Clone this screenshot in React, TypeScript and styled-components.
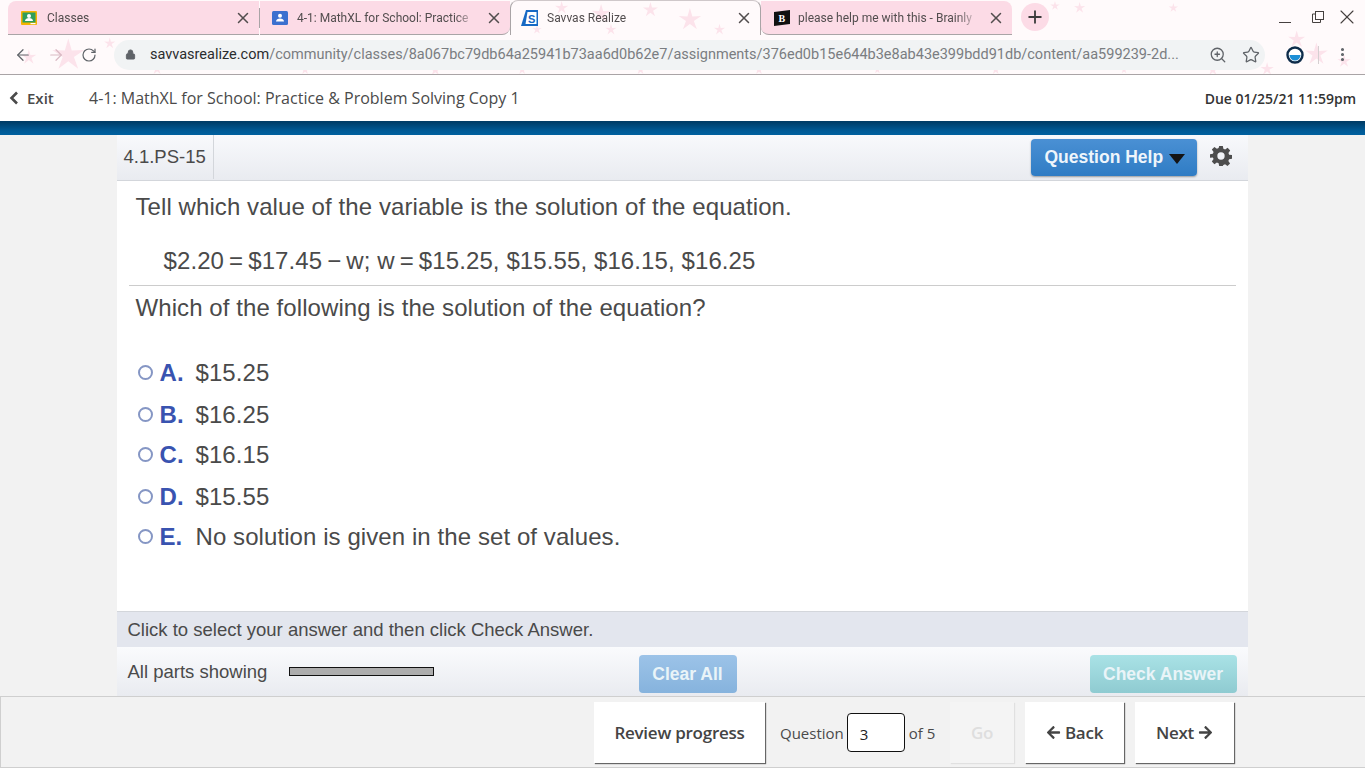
import React from "react";
import styled, { createGlobalStyle } from "styled-components";
import { ArrowLeft, ArrowRight, RotateCw, Lock, ZoomIn, Star, MoreVertical, Plus, X } from "lucide-react";
import { FaArrowLeft, FaArrowRight } from "react-icons/fa";

const GlobalStyle = createGlobalStyle`
  html, body { margin: 0; padding: 0; height: 100%; overflow: hidden; background: #f2f2f2; }
  * { box-sizing: border-box; }
`;

const starSpots = [
  [60, 56, 17], [20, 58, 8], [102, 44, 6], [150, 70, 6], [300, 71, 5], [432, 71, 6], [600, 14, 10], [650, 10, 8], [690, 20, 12],
  [560, 8, 7], [720, 30, 6], [535, 30, 5], [610, 30, 6], [1085, 8, 6], [1180, 8, 5], [1220, 71, 6], [1305, 40, 9], [1325, 55, 12],
  [1275, 70, 7], [1130, 71, 4], [1353, 62, 7], [880, 71, 4], [760, 71, 5], [640, 71, 5], [520, 71, 5], [1000, 71, 5], [1060, 6, 5],
];

function starPath(cx: number, cy: number, r: number) {
  const pts: string[] = [];
  for (let i = 0; i < 10; i++) {
    const rad = i % 2 === 0 ? r : r * 0.35;
    const a = (Math.PI / 5) * i - Math.PI / 2;
    pts.push(`${(cx + rad * Math.cos(a)).toFixed(1)},${(cy + rad * Math.sin(a)).toFixed(1)}`);
  }
  return pts.join(" ");
}

const Chrome = styled.div`
  position: relative;
  height: 75px;
  background: #fffafb;
  border-bottom: 1px solid #a9a4a6;
  font-family: Roboto, "Liberation Sans", sans-serif;
  overflow: hidden;
`;

const StarLayer = styled.svg`
  position: absolute;
  inset: 0;
  width: 100%;
  height: 100%;
`;

const TabStrip = styled.div`
  position: relative;
  height: 35px;
  display: flex;
  align-items: flex-end;
  padding-left: 8px;
`;

const Tab = styled.div<{ $active?: boolean; $w: number; $pad: number; $rounded?: string }>`
  position: relative;
  width: ${(p) => p.$w}px;
  height: ${(p) => (p.$active ? "35px" : "34px")};
  flex: none;
  display: flex;
  align-items: center;
  padding: 0 7px 0 ${(p) => p.$pad}px;
  gap: 8px;
  font-size: 12px;
  color: #524d4e;
  background: ${(p) => (p.$active ? "transparent" : "#fcdbe6")};
  border-radius: ${(p) => p.$rounded || "0"};
  border-bottom: ${(p) => (p.$active ? "none" : "1px solid #a9a4a6")};
  border-top: ${(p) => (p.$active ? "1px solid #cfc8ca" : "none")};
  border-left: ${(p) => (p.$active ? "1px solid #a9a4a6" : "none")};
  border-right: ${(p) => (p.$active ? "1px solid #a9a4a6" : "none")};
`;

const TabTitle = styled.span<{ $shift?: number }>`
  flex: 1;
  margin-left: ${(p) => p.$shift || 0}px;
  white-space: nowrap;
  overflow: hidden;
  -webkit-mask-image: linear-gradient(to right, #000 88%, transparent 100%);
  mask-image: linear-gradient(to right, #000 88%, transparent 100%);
`;

const TabSep = styled.div`
  width: 1px;
  height: 20px;
  background: #a9a4a6;
  margin-bottom: 7px;
  flex: none;
`;

const NewTab = styled.div`
  width: 28px;
  height: 28px;
  margin: 0 0 4px 9px;
  border-radius: 50%;
  background: #fcdbe6;
  display: flex;
  align-items: center;
  justify-content: center;
  flex: none;
  color: #3c3c3c;
`;

const WindowControls = styled.div`
  position: absolute;
  top: 0;
  right: 0;
  height: 34px;
  display: flex;
  align-items: center;
  color: #45403f;
`;

const MinimizeBar = styled.span`
  width: 12px;
  height: 1px;
  background: #45403f;
  margin: 11px 21px 0 0;
`;

const CloseSlot = styled.span`
  display: flex;
  margin: 0 6px 0 11px;
`;

const Toolbar = styled.div`
  position: relative;
  height: 39px;
  display: flex;
  align-items: center;
  padding-left: 14px;
  color: #5f6368;
`;

const NavIcon = styled.div<{ $faded?: boolean }>`
  width: 18px;
  height: 18px;
  margin-right: 15px;
  display: flex;
  align-items: center;
  justify-content: center;
  color: ${(p) => (p.$faded ? "#d9b9c3" : "#5f6368")};
`;

const UrlBar = styled.div`
  width: 1151px;
  height: 30px;
  margin-left: 1px;
  border-radius: 15px;
  background: #f1f3f4;
  display: flex;
  align-items: center;
  padding: 0 5px 0 11px;
  font-size: 14.5px;
  white-space: nowrap;
`;

const UrlText = styled.span`
  flex: 1;
  margin-left: 14px;
  color: #7a7d81;
  overflow: hidden;
  b { font-weight: 400; color: #2a2c2e; }
`;

const UrlTools = styled.div`
  display: flex;
  gap: 15px;
  margin-left: 10px;
  align-items: center;
  color: #5f6368;
`;

const ToolbarEnd = styled.div`
  display: flex;
  align-items: center;
  margin-left: 21px;
  color: #5f6368;
`;

const Divider = styled.div`
  width: 1px;
  height: 18px;
  background: #d5cfd1;
  margin: 0 15px 0 14px;
`;

const AppHeader = styled.header`
  height: 46px;
  background: #fff;
  display: flex;
  align-items: center;
  font-family: "Open Sans", sans-serif;
  padding: 0 9px;
`;

const ExitLink = styled.a`
  display: flex;
  align-items: center;
  gap: 8px;
  font-size: 15px;
  font-weight: 600;
  color: #4a4a4a;
  width: 80px;
`;

const AssignmentTitle = styled.div`
  flex: 1;
  font-size: 16px;
  color: #4a4a4a;
`;

const DueDate = styled.div`
  font-size: 14px;
  font-weight: 600;
  color: #333;
`;

const BlueBand = styled.div`
  height: 14px;
  background: linear-gradient(#003a63, #005a96 70%, #00609f);
`;

const Stage = styled.main`
  height: 561px;
  display: flex;
  justify-content: center;
  background: #f2f2f2;
`;

const Panel = styled.section`
  width: 1131px;
  margin-left: -1px;
  display: flex;
  flex-direction: column;
  background: #fff;
  font-family: "Liberation Sans", Arial, sans-serif;
  color: #4a4a4a;
`;

const TopBar = styled.div`
  height: 46px;
  flex: none;
  display: flex;
  align-items: stretch;
  background: linear-gradient(#f8f9fc, #e9ebf0);
  border-bottom: 1px solid #d3d6db;
`;

const QuestionId = styled.div`
  width: 97px;
  border-right: 1px solid #d3d6db;
  padding-left: 7px;
  display: flex;
  align-items: center;
  font-size: 18.5px;
  height: 44px;
`;

const HelpButton = styled.button`
  margin: 4px 0 0 auto;
  width: 166px;
  height: 37px;
  border: none;
  border-radius: 4px;
  background: linear-gradient(#4a90d4, #2f7cc4);
  box-shadow: 0 1px 2px rgba(0, 0, 0, 0.35);
  color: #eef5fb;
  font: 700 17.5px "Liberation Sans", Arial, sans-serif;
  display: flex;
  align-items: center;
  padding: 0 0 0 14px;
  gap: 6px;
`;

const Caret = styled.span`
  width: 0;
  height: 0;
  border-left: 8px solid transparent;
  border-right: 8px solid transparent;
  border-top: 10px solid #141414;
  margin-top: 2px;
`;

const GearBox = styled.div`
  width: 51px;
  padding: 10px 0 0 13px;
  color: #4d4d4d;
`;

const Body = styled.div`
  flex: 1;
  display: flex;
  flex-direction: column;
  padding: 0 12px;
`;

const Prompt = styled.p`
  margin: 0;
  padding-left: 7px;
  font-size: 24px;
  line-height: 28px;
  letter-spacing: 0.08px;
`;

const FirstPrompt = styled(Prompt)`
  padding-top: 12px;
`;

const Equation = styled(Prompt)`
  padding-left: 35px;
  padding-top: 26px;
  padding-bottom: 10px;
  border-bottom: 1px solid #ccc;
  letter-spacing: 0.1px;
`;

const Thin = styled.span`
  margin: 0 5px;
`;

const SecondPrompt = styled(Prompt)`
  padding-top: 8px;
`;

const Options = styled.ul`
  list-style: none;
  margin: 37px 0 0;
  padding: 0 0 0 9px;
`;

const OptionRow = styled.li<{ $h: number }>`
  height: ${(p) => p.$h}px;
  display: flex;
  align-items: flex-start;
  font-size: 24px;
  line-height: 28px;
  letter-spacing: 0.08px;
`;

const Radio = styled.span`
  width: 15px;
  height: 15px;
  border-radius: 50%;
  border: 2px solid #8596c4;
  background: #fff;
  flex: none;
  margin: 6px 7px 0 0;
`;

const OptionLetter = styled.span`
  width: 36px;
  font-weight: 700;
  color: #3953b0;
  flex: none;
`;

const InstructionBar = styled.div`
  height: 36px;
  flex: none;
  background: #e3e6ee;
  border-top: 1px solid #d3d6db;
  display: flex;
  align-items: center;
  padding-left: 11px;
  font-size: 18.5px;
`;

const StatusBar = styled.div`
  height: 49px;
  flex: none;
  background: linear-gradient(#fafbfd, #e9ebf0);
  display: flex;
  align-items: center;
  padding-left: 11px;
  font-size: 18.5px;
`;

const PartsLabel = styled.span`
  width: 161px;
`;

const ProgressTrack = styled.div`
  width: 145px;
  height: 9px;
  background: #adadad;
  border: 1px solid #111;
`;

const FadedButton = styled.button<{ $tone: string; $w: number }>`
  display: block;
  width: ${(p) => p.$w}px;
  height: 38px;
  border: none;
  border-radius: 4px;
  background: ${(p) => p.$tone};
  color: #e9f4f8;
  font: 700 17.5px "Liberation Sans", Arial, sans-serif;
  padding: 0;
`;

const ClearSlot = styled.div`
  margin: 5px 0 0 205px;
`;

const CheckSlot = styled.div`
  margin: 5px 11px 0 auto;
`;

const BottomBar = styled.footer`
  height: 72px;
  background: #f2f2f2;
  border: 1px solid #cfcfcf;
  border-right: none;
  display: flex;
  align-items: flex-start;
  font-family: "Open Sans", sans-serif;
  color: #4a4a4a;
  padding: 5px 0 0 593px;
`;

const NavButton = styled.button<{ $w: number; $ghost?: boolean }>`
  width: ${(p) => p.$w}px;
  height: 61px;
  flex: none;
  border: none;
  padding: 0;
  background: ${(p) => (p.$ghost ? "#f4f4f4" : "#fff")};
  box-shadow: ${(p) => (p.$ghost ? "1px 1px 1px #e0e0e0" : "1px 1px 1px #666")};
  font: 600 17px "Open Sans", sans-serif;
  letter-spacing: -0.25px;
  color: ${(p) => (p.$ghost ? "#dedede" : "#444")};
  display: flex;
  align-items: center;
  justify-content: center;
  gap: 4px;
`;

const QuestionJump = styled.div`
  width: 185px;
  height: 61px;
  display: flex;
  align-items: center;
  font-size: 15px;
  padding-left: 15px;
  flex: none;
`;

const JumpInput = styled.div`
  width: 58px;
  height: 39px;
  margin: 0 4px 0 3px;
  border: 1px solid #111;
  border-radius: 4px;
  background: #fff;
  color: #222;
  display: flex;
  align-items: center;
  padding: 2px 0 0 12px;
  font-size: 15px;
`;

const ButtonSlot = styled.div`
  margin-right: 11px;
`;

function ClassroomIcon() {
  return (
    <svg width="16" height="14" viewBox="0 0 16 14">
      <rect width="16" height="14" rx="1" fill="#f4b400" />
      <rect x="1.5" y="1.5" width="13" height="10" fill="#2f9e5b" />
      <circle cx="8" cy="5" r="2" fill="#fff" />
      <path d="M4 10c0-2 2-3 4-3s4 1 4 3z" fill="#fff" />
      <rect x="9.5" y="12" width="5" height="1.2" fill="#fff" />
    </svg>
  );
}

function AssignmentIcon() {
  return (
    <svg width="16" height="14" viewBox="0 0 16 14">
      <rect width="16" height="14" rx="1.5" fill="#3c70cf" />
      <circle cx="8" cy="4.8" r="2" fill="#fff" />
      <path d="M4 10.5c0-2 2-3 4-3s4 1 4 3z" fill="#fff" />
    </svg>
  );
}

function SavvasIcon() {
  return (
    <svg width="17" height="17" viewBox="0 0 17 17">
      <path d="M5 0h12v16H0z" fill="#1769c4" />
      <path d="M6.5 2h9v12h-11z" fill="#fff" />
      <text x="7" y="13" fontSize="11" fontWeight="700" fontFamily="Liberation Sans" fill="#1769c4">S</text>
    </svg>
  );
}

function BrainlyIcon() {
  return (
    <svg width="16" height="16" viewBox="0 0 16 16">
      <path d="M0 2l16-2v14L0 16z" fill="#111" />
      <text x="4.5" y="12" fontSize="10" fontWeight="700" fontFamily="Liberation Serif" fill="#fff">B</text>
    </svg>
  );
}

function ProfileIcon() {
  return (
    <svg width="18" height="18" viewBox="0 0 18 18">
      <circle cx="9" cy="9" r="7.5" fill="#fff" stroke="#0e2c4a" strokeWidth="2.4" />
      <path d="M3.5 9h11a5.5 5.5 0 0 1-11 0z" fill="#1c8fd6" />
    </svg>
  );
}

function RestoreIcon() {
  return (
    <svg width="12" height="12" viewBox="0 0 12 12" fill="none" stroke="#45403f" strokeWidth="1">
      <rect x="3.5" y="0.5" width="8" height="8" />
      <path d="M3.5 3H0.5v8.5h8V8.5" />
    </svg>
  );
}

function Gear() {
  return (
    <svg width="22" height="22" viewBox="0 0 24 24" fill="currentColor">
      <path fillRule="evenodd" d="M10 1h4l.6 3.2 1.9.8 2.7-1.9 2.8 2.8-1.9 2.7.8 1.9 3.1.5v4l-3.2.6-.8 1.9 1.900 2.700-2.800 2.800-2.700-1.900-1.900.8L14 23h-4l-.6-3.200-1.900-.8-2.700 1.900-2.800-2.800 1.900-2.700-.8-1.900L0 14v-4l3.100-.5.8-1.900L2 4.900l2.800-2.800 2.700 1.900 1.900-.8zM12 8a4 4 0 1 0 0 8 4 4 0 0 0 0-8z" />
    </svg>
  );
}

const options = [
  { letter: "A.", text: "$15.25", h: 42 },
  { letter: "B.", text: "$16.25", h: 40 },
  { letter: "C.", text: "$16.15", h: 42 },
  { letter: "D.", text: "$15.55", h: 40 },
  { letter: "E.", text: "No solution is given in the set of values.", h: 40 },
];

export default function App() {
  return (
    <>
      <GlobalStyle />
      <Chrome>
        <StarLayer viewBox="0 0 1365 75">
          {starSpots.map(([x, y, r], i) => (
            <polygon key={i} points={starPath(x, y, r)} fill="#fce3eb" />
          ))}
        </StarLayer>
        <TabStrip>
          <Tab $w={251} $pad={13} $rounded="8px 0 0 0">
            <ClassroomIcon />
            <TabTitle $shift={2}>Classes</TabTitle>
            <X size={18} strokeWidth={2} />
          </Tab>
          <TabSep />
          <Tab $w={250} $pad={12} $rounded="0 0 8px 0">
            <AssignmentIcon />
            <TabTitle $shift={1}>4-1: MathXL for School: Practice</TabTitle>
            <X size={18} strokeWidth={2} />
          </Tab>
          <Tab $active $w={251} $pad={10} $rounded="8px 8px 0 0">
            <SavvasIcon />
            <TabTitle $shift={1}>Savvas Realize</TabTitle>
            <X size={18} strokeWidth={2} />
          </Tab>
          <Tab $w={251} $pad={13} $rounded="0 8px 0 8px">
            <BrainlyIcon />
            <TabTitle>please help me with this - Brainly</TabTitle>
            <X size={18} strokeWidth={2} />
          </Tab>
          <NewTab>
            <Plus size={20} strokeWidth={2.2} />
          </NewTab>
        </TabStrip>
        <WindowControls>
          <MinimizeBar />
          <RestoreIcon />
          <CloseSlot>
            <X size={24} strokeWidth={1.1} />
          </CloseSlot>
        </WindowControls>
        <Toolbar>
          <NavIcon><ArrowLeft size={18} strokeWidth={1.6} /></NavIcon>
          <NavIcon $faded><ArrowRight size={18} strokeWidth={1.6} /></NavIcon>
          <NavIcon><RotateCw size={16} strokeWidth={1.8} /></NavIcon>
          <UrlBar>
            <Lock size={11} fill="#5f6368" color="#5f6368" />
            <UrlText>
              <b>savvasrealize.com</b>/community/classes/8a067bc79db64a25941b73aa6d0b62e7/assignments/376ed0b15e644b3e8ab43e399bdd91db/content/aa599239-2d...
            </UrlText>
            <UrlTools>
              <ZoomIn size={18} strokeWidth={1.7} />
              <Star size={18} strokeWidth={1.7} />
            </UrlTools>
          </UrlBar>
          <ToolbarEnd>
            <ProfileIcon />
            <Divider />
            <MoreVertical size={17} strokeWidth={2.4} />
          </ToolbarEnd>
        </Toolbar>
      </Chrome>
      <AppHeader>
        <ExitLink>
          <svg width="10" height="14" viewBox="0 0 10 14">
            <path d="M8 1.500L2.500 7 8 12.500" fill="none" stroke="#4a4a4a" strokeWidth="2.600" />
          </svg>
          Exit
        </ExitLink>
        <AssignmentTitle>4-1: MathXL for School: Practice &amp; Problem Solving Copy 1</AssignmentTitle>
        <DueDate>Due 01/25/21 11:59pm</DueDate>
      </AppHeader>
      <BlueBand />
      <Stage>
        <Panel>
          <TopBar>
            <QuestionId>4.1.PS-15</QuestionId>
            <HelpButton>
              Question Help <Caret />
            </HelpButton>
            <GearBox><Gear /></GearBox>
          </TopBar>
          <Body>
            <FirstPrompt>Tell which value of the variable is the solution of the equation.</FirstPrompt>
            <Equation>
              $2.20<Thin>=</Thin>$17.45<Thin>−</Thin>w; w<Thin>=</Thin>$15.25, $15.55, $16.15, $16.25
            </Equation>
            <SecondPrompt>Which of the following is the solution of the equation?</SecondPrompt>
            <Options>
              {options.map((o) => (
                <OptionRow key={o.letter} $h={o.h}>
                  <Radio />
                  <OptionLetter>{o.letter}</OptionLetter>
                  {o.text}
                </OptionRow>
              ))}
            </Options>
          </Body>
          <InstructionBar>Click to select your answer and then click Check Answer.</InstructionBar>
          <StatusBar>
            <PartsLabel>All parts showing</PartsLabel>
            <ProgressTrack />
            <ClearSlot>
              <FadedButton $w={98} $tone="linear-gradient(#9cc3e8, #86b3dd)">Clear All</FadedButton>
            </ClearSlot>
            <CheckSlot>
              <FadedButton $w={147} $tone="linear-gradient(#a9e2e6, #8fcbd1)">Check Answer</FadedButton>
            </CheckSlot>
          </StatusBar>
        </Panel>
      </Stage>
      <BottomBar>
        <NavButton $w={171}>Review progress</NavButton>
        <QuestionJump>
          Question
          <JumpInput>3</JumpInput>
          of 5
        </QuestionJump>
        <ButtonSlot><NavButton $w={64} $ghost>Go</NavButton></ButtonSlot>
        <ButtonSlot>
          <NavButton $w={99}><FaArrowLeft size={15} />Back</NavButton>
        </ButtonSlot>
        <NavButton $w={99}>Next<FaArrowRight size={15} /></NavButton>
      </BottomBar>
    </>
  );
}
